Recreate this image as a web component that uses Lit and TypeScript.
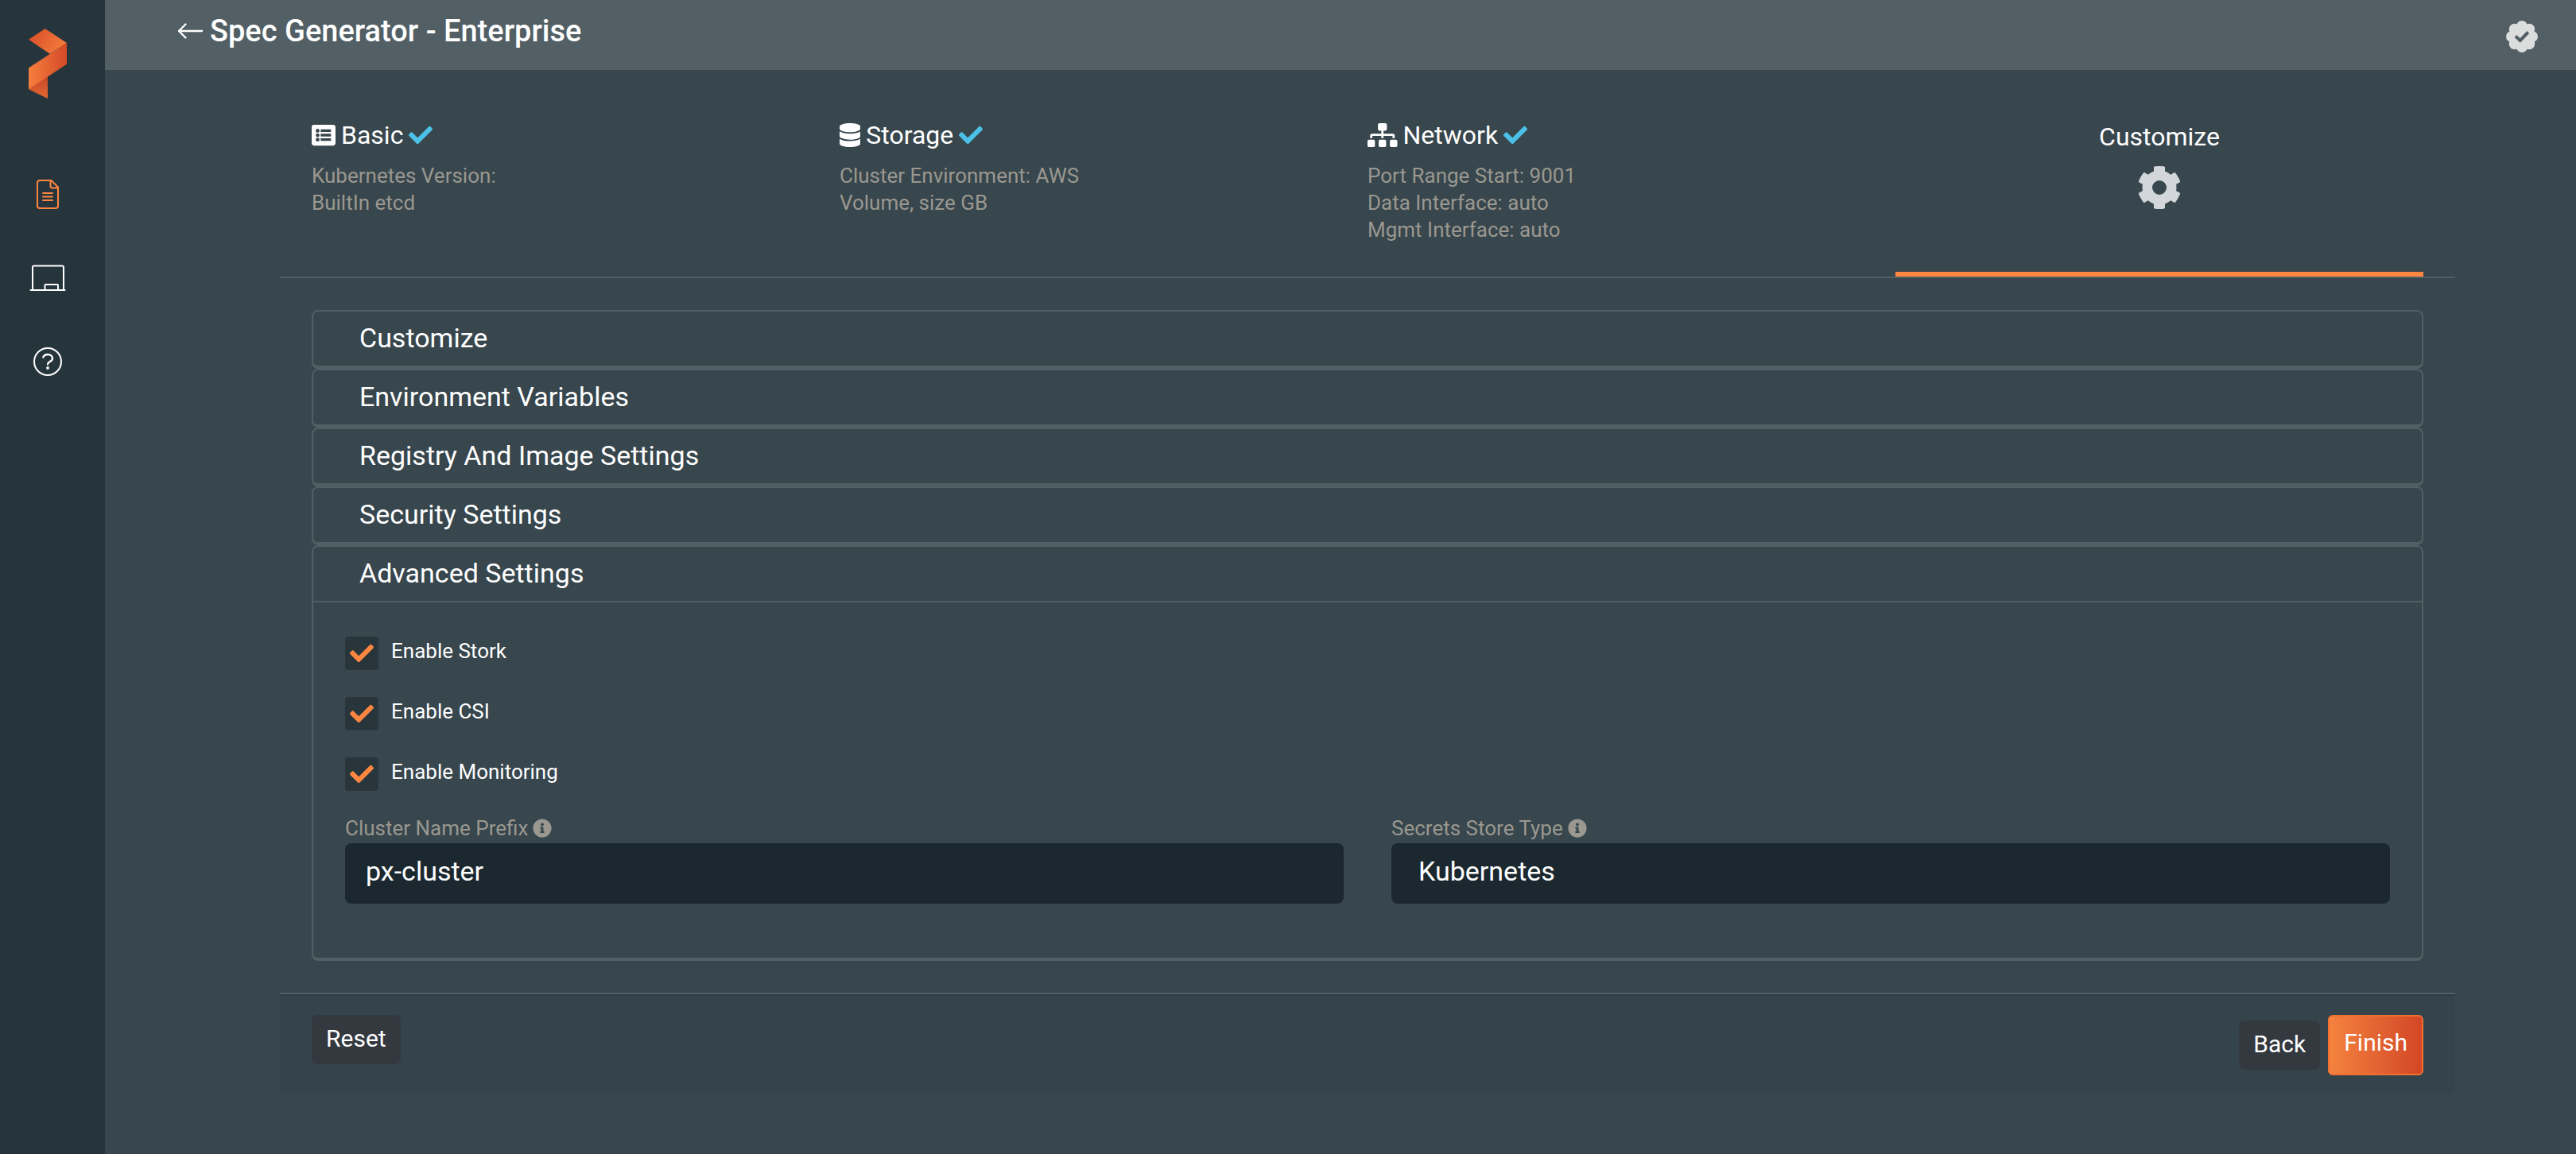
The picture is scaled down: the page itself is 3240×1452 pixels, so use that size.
import { LitElement, html, css, svg, TemplateResult } from "lit";
import { customElement, property, state } from "lit/decorators.js";

const ICONS = {
  list: {
    box: "0 0 512 512",
    path: "M464 480H48c-26.51 0-48-21.49-48-48V80c0-26.51 21.49-48 48-48h416c26.51 0 48 21.49 48 48v352c0 26.51-21.49 48-48 48zM128 120c-22.091 0-40 17.909-40 40s17.909 40 40 40 40-17.909 40-40-17.909-40-40-40zm0 96c-22.091 0-40 17.909-40 40s17.909 40 40 40 40-17.909 40-40-17.909-40-40-40zm0 96c-22.091 0-40 17.909-40 40s17.909 40 40 40 40-17.909 40-40-17.909-40-40-40zm288-136v-32c0-6.627-5.373-12-12-12H204c-6.627 0-12 5.373-12 12v32c0 6.627 5.373 12 12 12h200c6.627 0 12-5.373 12-12zm0 96v-32c0-6.627-5.373-12-12-12H204c-6.627 0-12 5.373-12 12v32c0 6.627 5.373 12 12 12h200c6.627 0 12-5.373 12-12zm0 96v-32c0-6.627-5.373-12-12-12H204c-6.627 0-12 5.373-12 12v32c0 6.627 5.373 12 12 12h200c6.627 0 12-5.373 12-12z",
  },
  database: {
    box: "0 0 448 512",
    path: "M448 73.143v45.714C448 159.143 347.667 192 224 192S0 159.143 0 118.857V73.143C0 32.857 100.333 0 224 0s224 32.857 224 73.143zM448 176v102.857C448 319.143 347.667 352 224 352S0 319.143 0 278.857V176c48.125 33.143 136.208 48.572 224 48.572S399.874 209.143 448 176zm0 160v102.857C448 479.143 347.667 512 224 512S0 479.143 0 438.857V336c48.125 33.143 136.208 48.572 224 48.572S399.874 369.143 448 336z",
  },
  sitemap: {
    box: "0 0 640 512",
    path: "M128 352H32c-17.67 0-32 14.33-32 32v96c0 17.67 14.33 32 32 32h96c17.67 0 32-14.33 32-32v-96c0-17.67-14.33-32-32-32zm-24-80h192v48h48v-48h192v48h48v-57.59c0-21.17-17.23-38.41-38.41-38.41H344v-64h40c17.67 0 32-14.33 32-32V32c0-17.67-14.33-32-32-32H256c-17.67 0-32 14.33-32 32v96c0 17.67 14.33 32 32 32h40v64H94.41C73.23 224 56 241.23 56 262.41V320h48v-48zm264 80h-96c-17.67 0-32 14.33-32 32v96c0 17.67 14.33 32 32 32h96c17.67 0 32-14.33 32-32v-96c0-17.67-14.33-32-32-32zm240 0h-96c-17.67 0-32 14.33-32 32v96c0 17.67 14.33 32 32 32h96c17.67 0 32-14.33 32-32v-96c0-17.67-14.33-32-32-32z",
  },
  check: {
    box: "0 0 512 512",
    path: "M173.898 439.404l-166.4-166.4c-9.997-9.997-9.997-26.206 0-36.204l36.203-36.204c9.997-9.998 26.207-9.998 36.204 0L192 312.69 432.095 72.596c9.997-9.997 26.207-9.997 36.204 0l36.203 36.204c9.997 9.997 9.997 26.206 0 36.204l-294.4 294.401c-9.998 9.997-26.207 9.997-36.204-.001z",
  },
  info: {
    box: "0 0 512 512",
    path: "M256 8C119.043 8 8 119.083 8 256c0 136.997 111.043 248 248 248s248-111.003 248-248C504 119.083 392.957 8 256 8zm0 110c23.196 0 42 18.804 42 42s-18.804 42-42 42-42-18.804-42-42 18.804-42 42-42zm56 254c0 6.627-5.373 12-12 12h-88c-6.627 0-12-5.373-12-12v-24c0-6.627 5.373-12 12-12h12v-64h-12c-6.627 0-12-5.373-12-12v-24c0-6.627 5.373-12 12-12h64c6.627 0 12 5.373 12 12v100h12c6.627 0 12 5.373 12 12v24z",
  },
};

type IconName = keyof typeof ICONS;

const glyph = (name: IconName, cls: string) => html`
  <svg class=${cls} viewBox=${ICONS[name].box} aria-hidden="true">
    <path fill="currentColor" d=${ICONS[name].path}></path>
  </svg>
`;

const FONT = css`"Roboto", "Liberation Sans", sans-serif`;

@customElement("side-nav")
class SideNav extends LitElement {
  static styles = css`
    :host {
      display: block;
      box-sizing: border-box;
      width: 132px;
      padding: 36px 12px 0 0;
      background: #26353c;
    }
    .logo {
      display: block;
      width: 48px;
      height: 88px;
      margin: 0 auto;
    }
    .links {
      display: flex;
      flex-direction: column;
      margin-top: 68px;
    }
    .link {
      display: flex;
      align-items: center;
      justify-content: center;
      height: 105px;
      color: #ffffff;
    }
    .link.active {
      color: #ff8640;
    }
    .icon {
      width: 48px;
      height: 48px;
      fill: none;
      stroke: currentColor;
      stroke-linecap: round;
      stroke-linejoin: round;
    }
  `;

  render() {
    return html`
      <svg class="logo" viewBox="0 0 48 88" role="img" aria-label="Portworx">
        <defs>
          <linearGradient id="top" x1="0" x2="1" y1="0.3" y2="0.7">
            <stop offset="0" stop-color="#d94f2a"></stop>
            <stop offset="1" stop-color="#f67f3d"></stop>
          </linearGradient>
          <linearGradient id="band" x1="0" x2="1">
            <stop offset="0" stop-color="#f67f3d"></stop>
            <stop offset="1" stop-color="#d44a27"></stop>
          </linearGradient>
          <linearGradient id="tail" x1="0" x2="0" y1="0" y2="1">
            <stop offset="0" stop-color="#c1432a"></stop>
            <stop offset="0.9" stop-color="#e2652f"></stop>
          </linearGradient>
        </defs>
        <path fill="url(#tail)" d="M24 58V88L0 76.3z"></path>
        <path fill="url(#top)" d="M20.7 0L48 18 26.7 31.8 0 13.8z"></path>
        <path fill="url(#band)" d="M48 18V44.8L0 76.3V49.4z"></path>
      </svg>
      <nav class="links" aria-label="Main">
        <a class="link active" href="#specs" aria-label="Specs">
          <svg class="icon" viewBox="0 1 48 48" stroke-width="2">
            <path d="M14 7h14.5L37 15.500V39a3 3 0 0 1-3 3H14a3 3 0 0 1-3-3V10a3 3 0 0 1 3-3z"></path>
            <path d="M27.500 7.500V14a2.500 2.500 0 0 0 2.500 2.500h6.500"></path>
            <path d="M18 23h12M18 27.500h12M18 32h12"></path>
          </svg>
        </a>
        <a class="link" href="#clusters" aria-label="Clusters">
          <svg class="icon" viewBox="0 0 48 48" stroke-width="2">
            <path d="M5 38.500V10.500a2 2 0 0 1 2-2h35a2 2 0 0 1 2 2v28"></path>
            <path d="M20.500 38V33a1 1 0 0 1 1-1h14.500a1 1 0 0 1 1 1V38"></path>
            <path d="M2.500 39h43"></path>
          </svg>
        </a>
        <a class="link" href="#help" aria-label="Help">
          <svg class="icon" viewBox="0 0 48 48" stroke-width="2">
            <circle cx="24" cy="24" r="17"></circle>
            <path stroke-width="2.400" d="M18.300 18.500C19.200 16.300 21.300 15 24 15c3.500 0 6 1.900 6 4.900 0 4.200-6 4-6 7.400"></path>
            <circle cx="24" cy="32" r="1.900" fill="currentColor" stroke="none"></circle>
          </svg>
        </a>
      </nav>
    `;
  }
}

@customElement("top-bar")
class TopBar extends LitElement {
  @property() heading = "";

  static styles = css`
    :host {
      display: flex;
      align-items: flex-start;
      justify-content: space-between;
      box-sizing: border-box;
      height: 88px;
      padding: 16px 44px 0 90px;
      background: #525f65;
      color: #ffffff;
      font-family: ${FONT};
    }
    .title {
      display: flex;
      align-items: center;
      gap: 8px;
      margin: 0;
      font-size: 38px;
      font-weight: 500;
      line-height: 46px;
    }
    .back {
      display: flex;
      color: inherit;
    }
    .arrow {
      width: 34px;
      height: 32px;
    }
    .badge {
      width: 48px;
      height: 48px;
      margin-top: 6px;
    }
  `;

  render() {
    const lobes = [0, 45, 90, 135, 180, 225, 270, 315];
    return html`
      <h1 class="title">
        <a class="back" href="#back" aria-label="Back to list">
          <svg class="arrow" viewBox="0 0 34 32">
            <path
              fill="none"
              stroke="currentColor"
              stroke-width="2.400"
              stroke-linecap="round"
              stroke-linejoin="round"
              d="M32 16H3M11.500 7.500L3 16l8.500 8.500"
            ></path>
          </svg>
        </a>
        ${this.heading}
      </h1>
      <svg class="badge" viewBox="-24 -24 48 48" role="img" aria-label="License valid">
        <g fill="#dcdddd">
          <circle r="15"></circle>
          ${lobes.map((a) => svg`<circle cy="-13" r="7" transform="rotate(${a})"></circle>`)}
        </g>
        <path
          fill="none"
          stroke="#525f65"
          stroke-width="4"
          d="M-8 -0.500L-2.200 5 7.800 -5.500"
        ></path>
      </svg>
    `;
  }
}

interface Step {
  title: string;
  icon: IconName;
  lines: string[];
}

@customElement("wizard-steps")
class WizardSteps extends LitElement {
  @property({ attribute: false }) steps: Step[] = [];
  @property() current = "";

  static styles = css`
    :host {
      display: block;
      padding: 60px 40px 0;
      border-bottom: 2px solid #525f65;
      font-family: ${FONT};
    }
    .steps {
      display: grid;
      grid-template-columns: repeat(4, 1fr);
      margin: 0;
      padding: 0;
      list-style: none;
    }
    .step {
      padding-bottom: 36px;
      border-bottom: 6px solid transparent;
    }
    .title {
      display: flex;
      align-items: center;
      gap: 7px;
      margin: 0 0 12px;
      color: #ffffff;
      font-size: 32px;
      font-weight: 400;
      line-height: 44px;
    }
    .icon {
      height: 30px;
    }
    .done {
      height: 30px;
      color: #4bc1e8;
    }
    .line {
      margin: 0;
      color: #9a9890;
      font-size: 26px;
      line-height: 34px;
    }
    .step.current {
      display: flex;
      flex-direction: column;
      align-items: center;
      border-bottom-color: #ff8640;
    }
    .step.current .title {
      line-height: 48px;
    }
    .gear {
      width: 56px;
      height: 56px;
    }
  `;

  render() {
    return html`
      <ol class="steps">
        ${this.steps.map(
          (s) => html`
            <li class="step">
              <h2 class="title">
                ${glyph(s.icon, "icon")}<span>${s.title}</span>${glyph("check", "done")}
              </h2>
              ${s.lines.map((l) => html`<p class="line">${l}</p>`)}
            </li>
          `
        )}
        <li class="step current" aria-current="step">
          <h2 class="title">${this.current}</h2>
          <svg class="gear" viewBox="-28 -28 56 56" aria-hidden="true">
            <circle r="15.250" fill="none" stroke="#d3d7db" stroke-width="12.500"></circle>
            ${[0, 60, 120, 180, 240, 300].map(
              (a) => svg`
                <path
                  fill="#d3d7db"
                  transform="rotate(${a})"
                  d="M-10 -17.500L-7 -20V-25.800Q-7 -27 0 -27T7 -25.800V-20L10 -17.500z"
                ></path>`
            )}
          </svg>
        </li>
      </ol>
    `;
  }
}

@customElement("settings-accordion")
class SettingsAccordion extends LitElement {
  @property({ attribute: false }) sections: string[] = [];
  @property({ attribute: false }) toggles: string[] = [];
  @state() private open = "Advanced Settings";

  static styles = css`
    :host {
      display: block;
      padding: 40px;
      font-family: ${FONT};
    }
    .card {
      border: 2px solid #525f65;
      border-bottom-width: 4px;
      border-radius: 8px;
    }
    .heading {
      margin: 0;
      font: inherit;
    }
    .trigger {
      display: block;
      width: 100%;
      height: 68px;
      padding: 0 58px 2px;
      border: 0;
      background: none;
      color: #ffffff;
      font-family: inherit;
      font-size: 34px;
      line-height: 40px;
      text-align: left;
    }
    .panel {
      padding: 43px 40px 68px;
      border-top: 2px solid #525f65;
    }
    .toggles {
      display: flex;
      flex-direction: column;
      gap: 34px;
    }
    .toggle {
      display: flex;
      align-items: flex-start;
      gap: 16px;
      color: #ffffff;
      font-size: 26px;
      line-height: 36px;
    }
    .tick {
      display: grid;
      width: 42px;
      height: 42px;
      border-radius: 4px;
      background: #28363c;
      place-items: center;
    }
    .box,
    .mark {
      grid-area: 1 / 1;
    }
    .box {
      width: 42px;
      height: 42px;
      margin: 0;
      opacity: 0;
    }
    .mark {
      width: 30px;
      height: 30px;
      color: #ff8640;
      pointer-events: none;
    }
    .box:not(:checked) + .mark {
      visibility: hidden;
    }
    .fields {
      display: grid;
      grid-template-columns: 1fr 1fr;
      gap: 60px;
      margin-top: 32px;
    }
    .caption {
      display: flex;
      align-items: center;
      gap: 6px;
      margin-bottom: 4px;
      color: #9a9890;
      font-size: 26px;
      line-height: 30px;
    }
    .info {
      width: 24px;
      height: 24px;
    }
    .control {
      display: block;
      box-sizing: border-box;
      width: 100%;
      height: 76px;
      margin: 0;
      padding: 0 26px 6px;
      border: 0;
      border-radius: 8px;
      appearance: none;
      background: #1b282f;
      color: #ffffff;
      font-family: inherit;
      font-size: 34px;
      line-height: 40px;
    }
    .control.choice {
      padding-left: 34px;
    }
  `;

  private panel(): TemplateResult {
    return html`
      <div class="panel">
        <div class="toggles">
          ${this.toggles.map(
            (t) => html`
              <label class="toggle">
                <span class="tick">
                  <input class="box" type="checkbox" checked />
                  ${glyph("check", "mark")}
                </span>
                ${t}
              </label>
            `
          )}
        </div>
        <div class="fields">
          <div>
            <label class="caption" for="prefix">Cluster Name Prefix ${glyph("info", "info")}</label>
            <input class="control" id="prefix" type="text" value="px-cluster" />
          </div>
          <div>
            <label class="caption" for="store">Secrets Store Type ${glyph("info", "info")}</label>
            <select class="control choice" id="store">
              <option selected>Kubernetes</option>
            </select>
          </div>
        </div>
      </div>
    `;
  }

  render() {
    return this.sections.map((name) => {
      const expanded = name === this.open;
      return html`
        <section class="card">
          <h3 class="heading">
            <button
              class="trigger"
              type="button"
              aria-expanded=${expanded ? "true" : "false"}
              @click=${() => (this.open = expanded ? "" : name)}
            >
              ${name}
            </button>
          </h3>
          ${expanded ? this.panel() : ""}
        </section>
      `;
    });
  }
}

@customElement("wizard-footer")
class WizardFooter extends LitElement {
  static styles = css`
    :host {
      display: flex;
      align-items: flex-start;
      justify-content: space-between;
      padding: 26px 40px 24px;
      border-top: 2px solid #525f65;
      border-radius: 0 0 8px 8px;
      background: #35434a;
      box-shadow: inset 0 2px 0 #303d44;
      font-family: ${FONT};
    }
    .group {
      display: flex;
      align-items: center;
      gap: 10px;
    }
    .button {
      height: 62px;
      padding: 0 18px 2px;
      border: 0;
      border-radius: 8px;
      background: #34383f;
      color: #ffffff;
      font-family: inherit;
      font-size: 30px;
      line-height: 36px;
    }
    .button.primary {
      height: 76px;
      padding-bottom: 6px;
      border: 2px solid #f0712f;
      border-radius: 6px;
      background: linear-gradient(90deg, #f5823f, #d24726);
    }
  `;

  render() {
    return html`
      <button class="button" type="reset">Reset</button>
      <div class="group">
        <button class="button" type="button">Back</button>
        <button class="button primary" type="submit">Finish</button>
      </div>
    `;
  }
}

@customElement("app-root")
class AppRoot extends LitElement {
  static styles = css`
    :host {
      display: flex;
      min-height: 100vh;
      background: #38464d;
    }
    .page {
      flex: 1;
      min-width: 0;
    }
    .content {
      padding: 0 152px 60px 220px;
    }
  `;

  private steps: Step[] = [
    { title: "Basic", icon: "list", lines: ["Kubernetes Version:", "BuiltIn etcd"] },
    { title: "Storage", icon: "database", lines: ["Cluster Environment: AWS", "Volume, size GB"] },
    {
      title: "Network",
      icon: "sitemap",
      lines: ["Port Range Start: 9001", "Data Interface: auto", "Mgmt Interface: auto"],
    },
  ];

  private sections = [
    "Customize",
    "Environment Variables",
    "Registry And Image Settings",
    "Security Settings",
    "Advanced Settings",
  ];

  private toggles = ["Enable Stork", "Enable CSI", "Enable Monitoring"];

  render() {
    return html`
      <side-nav></side-nav>
      <div class="page">
        <top-bar heading="Spec Generator - Enterprise"></top-bar>
        <main class="content">
          <wizard-steps .steps=${this.steps} current="Customize"></wizard-steps>
          <settings-accordion .sections=${this.sections} .toggles=${this.toggles}></settings-accordion>
          <wizard-footer></wizard-footer>
        </main>
      </div>
    `;
  }
}
